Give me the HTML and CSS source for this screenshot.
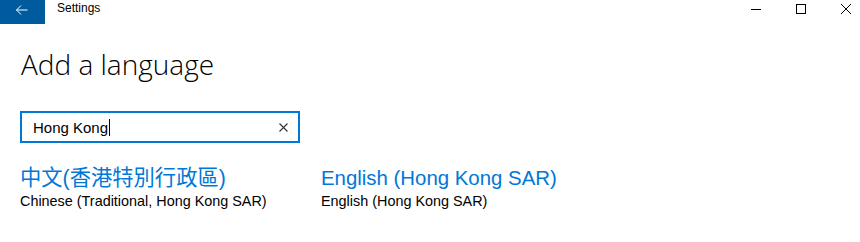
FILE: index.html
```html
<!DOCTYPE html>
<html>
<head>
<meta charset="utf-8">
<link rel="stylesheet" href="styles.css">
</head>
<body>
<div class="titlebar">
  <div class="back">
    <svg width="12" height="10" viewBox="0 0 12 10"><path d="M0.5 5 L11.5 5 M5 0.5 L0.5 5 L5 9.5" fill="none" stroke="#fff" stroke-width="1"/></svg>
  </div>
  <div class="apptitle">Settings</div>
  <div class="controls">
    <div class="ctl"><svg width="10" height="10" viewBox="0 0 10 10"><path d="M0 5.5 H10" stroke="#000" stroke-width="1"/></svg></div>
    <div class="ctl"><svg width="10" height="10" viewBox="0 0 10 10"><rect x="0.5" y="0.5" width="9" height="9" fill="none" stroke="#000" stroke-width="1"/></svg></div>
    <div class="ctl"><svg width="10" height="10" viewBox="0 0 10 10"><path d="M0 0 L10 10 M10 0 L0 10" stroke="#000" stroke-width="1"/></svg></div>
  </div>
</div>
<main class="content">
  <h1 class="heading">Add a language</h1>
  <div class="search">
    <span class="query">Hong Kong</span><span class="caret"></span>
    <svg class="clear" width="9" height="9" viewBox="0 0 9 9"><path d="M0.5 0.5 L8.5 8.5 M8.5 0.5 L0.5 8.5" stroke="#333" stroke-width="1.1"/></svg>
  </div>
  <div class="results">
    <div class="result">
      <div class="native cjk">中文(香港特別行政區)</div>
      <div class="desc">Chinese (Traditional, Hong Kong SAR)</div>
    </div>
    <div class="result">
      <div class="native">English (Hong Kong SAR)</div>
      <div class="desc">English (Hong Kong SAR)</div>
    </div>
  </div>
</main>
</body>
</html>
```
FILE: styles.css
```css
html, body {
  margin: 0;
  padding: 0;
  background: #fff;
  width: 860px;
  height: 242px;
  overflow: hidden;
  font-family: "Segoe UI", "Liberation Sans", "Noto Sans CJK TC", sans-serif;
  color: #000;
}
.titlebar {
  display: flex;
  align-items: flex-start;
  height: 32px;
}
.back {
  width: 45px;
  height: 24px;
  background: #005a9e;
  display: flex;
  align-items: center;
  justify-content: center;
}
.back svg { margin-top: -5px; margin-left: -2px; }
.apptitle {
  font-size: 12px;
  margin-left: 12px;
  line-height: 17px;
}
.controls {
  margin-left: auto;
  margin-right: -8px;
  display: flex;
}
.ctl {
  width: 45px;
  height: 18px;
  display: flex;
  align-items: center;
  justify-content: center;
}
.content {
  padding-left: 20px;
}
.heading {
  margin: 0;
  font-weight: 300;
  font-family: "Segoe UI", "Open Sans", sans-serif;
  font-size: 28px;
  line-height: 36px;
  margin-top: 14px;
  margin-left: 1px;
}
.search {
  margin-top: 29px;
  width: 276px;
  height: 28px;
  border: 2px solid #0078d7;
  display: flex;
  align-items: center;
}
.query {
  font-size: 15px;
  margin-left: 11px;
}
.caret {
  width: 1px;
  height: 17px;
  background: #000;
  margin-left: 1px;
}
.clear {
  margin-left: auto;
  margin-right: 10px;
}
.results {
  display: flex;
  margin-top: 22px;
}
.result {
  width: 301px;
}
.native {
  color: #0078d7;
  font-size: 20.4px;
  line-height: 26px;
}
.cjk {
  font-size: 21.3px;
  line-height: 26px;
}
.desc {
  font-size: 14.4px;
  line-height: 20px;
  color: #000;
}
```
